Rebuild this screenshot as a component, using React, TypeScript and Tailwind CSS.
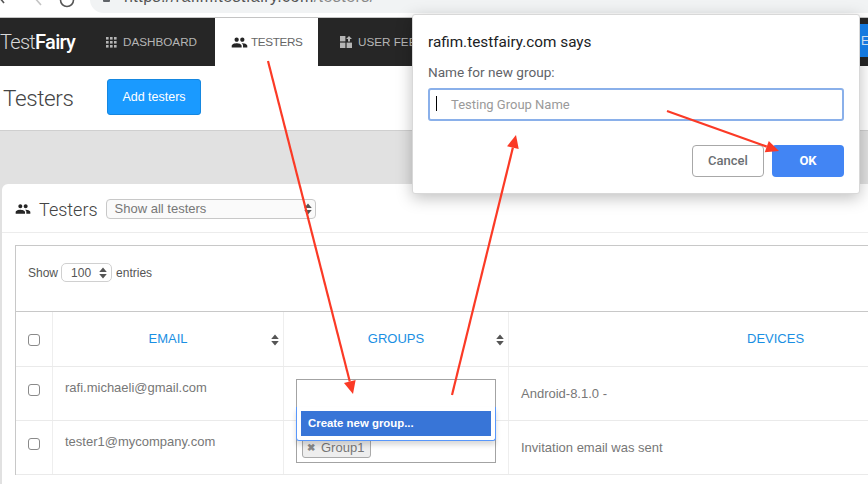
import React from "react";
import { MdPeople } from "react-icons/md";

const sans = "font-['Liberation_Sans',Arial,sans-serif]";

function Sort({ className = "" }: { className?: string }) {
  return (
    <svg width="8" height="12" viewBox="0 0 8 12" className={className}>
      <path d="M4 0.5 L7.8 5 H0.2 Z M0.2 7 H7.8 L4 11.5 Z" fill="#555" />
    </svg>
  );
}

function Arrow({ x1, y1, x2, y2 }: { x1: number; y1: number; x2: number; y2: number }) {
  const a = Math.atan2(y2 - y1, x2 - x1);
  const len = 13;
  const w = 6;
  const bx = x2 - Math.cos(a) * len;
  const by = y2 - Math.sin(a) * len;
  const px = -Math.sin(a) * w;
  const py = Math.cos(a) * w;
  return (
    <g>
      <line x1={x1} y1={y1} x2={bx} y2={by} stroke="#fb3a26" strokeWidth="2.2" />
      <polygon points={`${x2},${y2} ${bx + px},${by + py} ${bx - px},${by - py}`} fill="#fb3a26" />
    </g>
  );
}

function Check() {
  return <span className="block h-[12px] w-[12px] rounded-[3px] border border-[#8a8a8a] bg-white" />;
}

export default function App() {
  return (
    <div className={`relative h-[484px] w-[868px] overflow-hidden bg-white ${sans}`}>
      {/* browser bar */}
      <div className="relative h-[18px] overflow-hidden border-b border-[#c4c4c4] bg-white">
        <svg width="90" height="17" viewBox="0 0 90 17" className="absolute left-0 top-0">
          <path d="M-1 -3 L4 3" stroke="#555" strokeWidth="1.6" fill="none" />
          <path d="M34 -3 L41 5" stroke="#c4c4c4" strokeWidth="1.6" fill="none" />
          <path d="M60.5 0 A6.5 6.5 0 0 0 73.5 0" stroke="#555" strokeWidth="1.6" fill="none" />
        </svg>
        <div className="absolute left-[90px] right-0 top-[-14px] flex h-[27px] items-center rounded-l-[14px] bg-[#f1f3f4] pl-[13px]">
          <span className="h-[6px] w-[7px] translate-y-[-1px] rounded-[1px] bg-[#5f6368]" />
          <span className="ml-[14px] translate-y-[-3px] text-[16px] tracking-[0.45px] text-[#555]">
            https://rafim.testfairy.com<span className="text-[#888]">/testers/</span>
          </span>
        </div>
      </div>

      {/* nav */}
      <nav className="flex h-[48px] items-stretch bg-[#262626] text-[11.7px] text-[#b5b5b5]">
        <div className="flex w-[106px] items-center font-['Roboto',sans-serif] text-[20px] font-light tracking-[-0.7px] text-[#d8d8d8]">
          Test<span className="font-medium text-white">Fairy</span>
        </div>
        <div className="flex w-[109px] items-center">
          <svg width="11" height="11" viewBox="0 0 11 11" fill="#b5b5b5">
            {[0, 4, 8].flatMap((x) =>
              [0, 4, 8].map((y) => <rect key={`${x}-${y}`} x={x} y={y} width="2.6" height="2.6" />)
            )}
          </svg>
          <span className="ml-[6px]">DASHBOARD</span>
        </div>
        <div className="flex w-[103px] items-center bg-white pl-[16px] text-[#666]">
          <MdPeople size={17} color="#262626" />
          <span className="ml-[3px] tracking-[-0.35px]">TESTERS</span>
        </div>
        <div className="flex flex-1 items-center pl-[22px]">
          <svg width="12" height="12" viewBox="0 0 12 12" fill="#b5b5b5">
            <rect x="0" y="0" width="5.4" height="5.4" />
            <path d="M9 0 L12 3 H10 V5.6 H8 V3 H6 Z" />
            <rect x="0" y="6.6" width="5.4" height="5.4" />
            <rect x="6.6" y="6.6" width="5.4" height="5.4" />
          </svg>
          <span className="ml-[6px]">USER FEEDBACK</span>
        </div>
      </nav>

      {/* page header */}
      <div className="flex h-[64px] items-center pb-[2px]">
        <h1 className="ml-[3px] w-[104px] pt-[4px] font-['Roboto',sans-serif] text-[22.5px] font-light tracking-[-0.4px] text-[#444]">Testers</h1>
        <button className="h-[36px] w-[94px] rounded-[3px] border border-[#1587e0] bg-[#1a9aff] text-[12.5px] text-white">
          Add testers
        </button>
      </div>

      {/* gray band + card */}
      <div className="h-[354px] border-t border-[#cfcfcf] bg-[#e1e1e1] pl-[2px] pt-[53px]">
        <div className="h-[300px] rounded-tl-[6px] bg-white">
          <div className="flex h-[49px] items-center border-b border-[#ececec] pl-[13px] pt-[2px]">
            <MdPeople size={16} color="#262626" />
            <span className="ml-[8px] font-['Roboto',sans-serif] text-[18px] font-light text-[#444]">Testers</span>
            <div className="relative ml-[8px] flex h-[20px] w-[210px] items-center rounded-[4px] border border-[#c8c8c8] bg-[#fafafa] pl-[8px] text-[13px] text-[#777]">
              Show all testers
              <Sort className="absolute right-[3px] top-[3px]" />
            </div>
          </div>

          <div className="ml-[13px] mt-[12px] border-l border-t border-[#c8c8c8]">
            <div className="flex h-[66px] items-center border-b border-[#c8c8c8] pb-[12px] pl-[12px] text-[12px] text-[#555]">
              Show
              <div className="relative mx-[3px] flex h-[19px] w-[51px] items-center rounded-[5px] border border-[#d0d0d0] pl-[9px]">
                100
                <Sort className="absolute right-[4px] top-[3px]" />
              </div>
              <span className="ml-[1px]">entries</span>
            </div>

            {/* header row */}
            <div className="flex h-[55px] border-b border-[#eaeaea] text-[13px] text-[#1a8fe3]">
              <div className="flex w-[37px] items-center justify-center border-r border-[#eeeeee] pt-[2px]">
                <Check />
              </div>
              <div className="relative flex w-[231px] items-center justify-center border-r border-[#eeeeee]">
                EMAIL
                <Sort className="absolute right-[4px] top-[22px]" />
              </div>
              <div className="relative flex w-[225px] items-center justify-center border-r border-[#eeeeee]">
                GROUPS
                <Sort className="absolute right-[4px] top-[22px]" />
              </div>
              <div className="flex flex-1 items-center pl-[238px]">DEVICES</div>
            </div>

            {/* rows */}
            <div className="flex h-[54px] border-b border-[#eaeaea] text-[13px] text-[#777]">
              <div className="flex w-[37px] items-center justify-center border-r border-[#eeeeee] pb-[8px]">
                <Check />
              </div>
              <div className="w-[231px] border-r border-[#eeeeee] pl-[12px] pt-[11px]">rafi.michaeli@gmail.com</div>
              <div className="w-[225px] border-r border-[#eeeeee]" />
              <div className="flex-1 pl-[12px] pt-[17px]">Android-8.1.0 -</div>
            </div>
            <div className="flex h-[54px] border-b border-[#eaeaea] text-[13px] text-[#777]">
              <div className="flex w-[37px] items-center justify-center border-r border-[#eeeeee] pb-[8px]">
                <Check />
              </div>
              <div className="w-[231px] border-r border-[#eeeeee] pl-[12px] pt-[11px]">tester1@mycompany.com</div>
              <div className="w-[225px] border-r border-[#eeeeee]" />
              <div className="flex-1 pl-[12px] pt-[17px]">Invitation email was sent</div>
            </div>
          </div>
        </div>
      </div>

      {/* select2 widget over the rows */}
      <div className="absolute left-[296px] top-[379px] h-[84px] w-[200px] border border-[#a3a3a3] bg-white">
        <div className="absolute bottom-[4px] left-[5px] flex h-[20px] w-[69px] items-center rounded-[3px] border border-[#aaa] bg-[#eeeeee] pl-[4px] text-[13px] text-[#777]">
          <span className="mr-[6px] text-[10px] font-bold leading-none text-[#888]">✖</span>Group1
        </div>
      </div>
      <div className="absolute left-[296px] top-[407px] h-[34px] w-[200px] rounded-b-[3px] border-x border-b border-[#5897fb] bg-white px-[4px] pt-[4px] shadow-[0_4px_5px_rgba(0,0,0,0.15)]">
        <div className="flex h-[25px] items-center bg-[#3875d7] pl-[7px] text-[11.4px] font-bold text-white">
          Create new group...
        </div>
      </div>

      {/* browser prompt */}
      <div className="absolute left-[412px] top-[14px] h-[180px] w-[448px] rounded-[3px] border border-[#d8d8d8] bg-white px-[15px] font-['Roboto',sans-serif] shadow-[0_4px_16px_rgba(0,0,0,0.25)]">
        <div className="mt-[17px] text-[15.3px] leading-[20px] text-[#202124]">rafim.testfairy.com says</div>
        <div className="mt-[10px] text-[13.6px] leading-[20px] text-[#5f6368]">Name for new group:</div>
        <div className="relative mt-[6px] flex h-[33px] items-center rounded-[3px] border-2 border-[#8ab0ea] pl-[21px] text-[13px] text-[#9a9a9a]">
          <span className="absolute left-[6px] top-[6px] h-[15px] w-px bg-black" />
          Testing Group Name
        </div>
        <div className="mt-[24px] flex justify-end gap-[8px] text-[13px] font-medium">
          <button className="h-[32px] w-[72px] rounded-[4px] border border-[#a8a8a8] text-[#6b6f73]">Cancel</button>
          <button className="h-[32px] w-[72px] rounded-[4px] bg-[#4285f4] font-bold text-white">OK</button>
        </div>
      </div>

      {/* blue right nav bit */}
      <div className="absolute right-0 top-[24px] flex h-[33px] w-[8px] items-center overflow-hidden bg-[#1479df] pl-[1px] text-[12px] text-[#cde]">E</div>

      {/* annotation arrows */}
      <svg width="868" height="484" viewBox="0 0 868 484" className="pointer-events-none absolute left-0 top-0">
        <Arrow x1={268} y1={61} x2={353} y2={394} />
        <Arrow x1={452} y1={395} x2={516} y2={135} />
        <Arrow x1={667} y1={111} x2={779} y2={151} />
      </svg>
    </div>
  );
}
